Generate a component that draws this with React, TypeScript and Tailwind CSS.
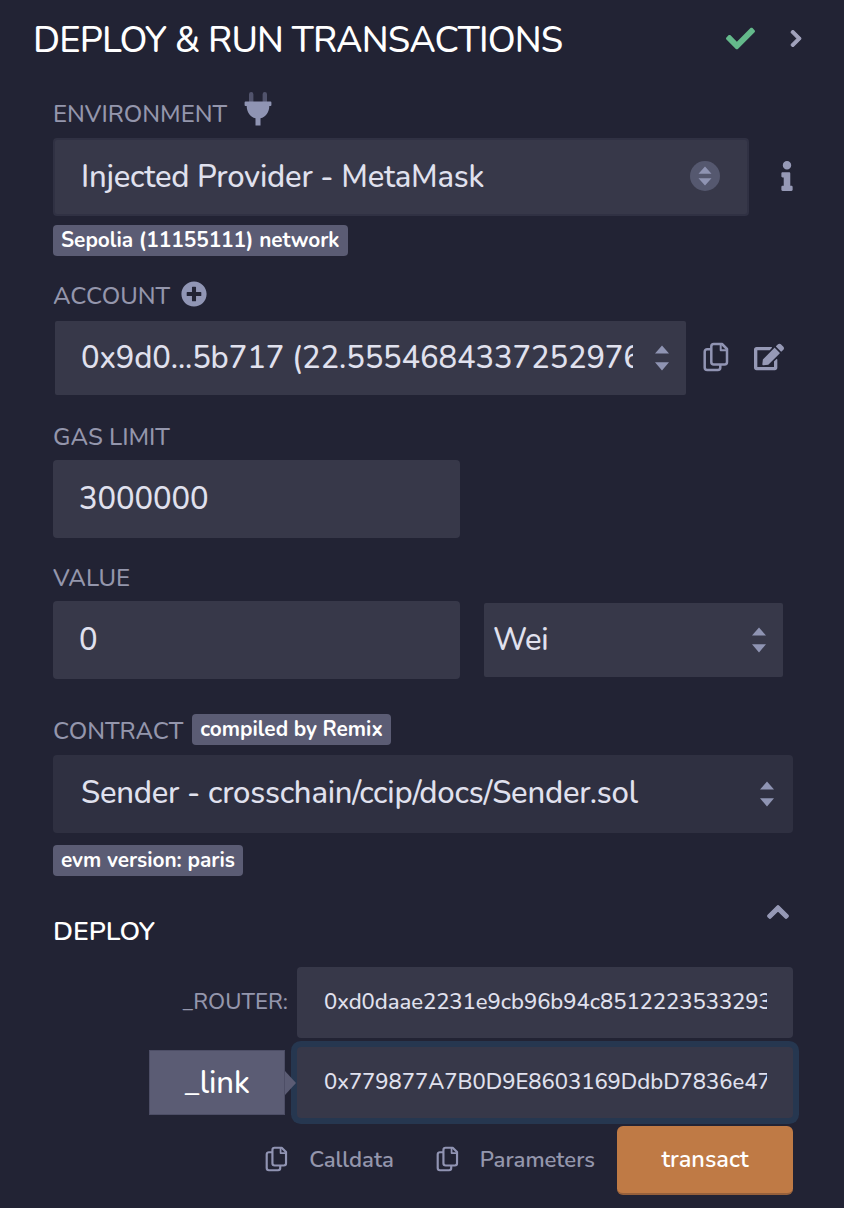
import type { ReactNode } from "react";
import { FaCheck, FaChevronRight, FaChevronUp, FaEdit, FaInfo, FaPlusCircle } from "react-icons/fa";

function PlugIcon() {
  return (
    <svg viewBox="0 0 28 36" className="h-9 w-7" aria-hidden="true">
      <path d="M5 11V3.2a2.2 2.2 0 0 1 4.4 0V11zM18.6 11V3.2a2.2 2.2 0 0 1 4.4 0V11z" fill="#51536c" />
      <path d="M1.500 10.500h25a.9.9 0 0 1 .9.9v2.600a.9.9 0 0 1-.9.9h-1.200c0 6.200-3.600 11-8.800 12.300v7.400h-5v-7.400C6.300 25.900 2.700 21.100 2.700 14.900h-1.200a.9.9 0 0 1-.9-.9v-2.600a.9.9 0 0 1 .9-.9z" fill="#8f94b3" />
    </svg>
  );
}

function CopyIcon({ className }: { className: string }) {
  return (
    <svg viewBox="0 0 26 30" className={className} fill="none" stroke="#9194b3" strokeWidth="2.500" strokeLinejoin="round" aria-hidden="true">
      <path d="M10.800 2h8.200l5 5v13a2.500 2.500 0 0 1-2.500 2.500H10.800A2.500 2.500 0 0 1 8.300 20V4.500A2.500 2.500 0 0 1 10.800 2z" />
      <path d="M17.700 2v6.200h6.200" strokeWidth="2" />
      <path d="M8.300 7.200H4.200a2.500 2.500 0 0 0-2.500 2.500v15.800A2.500 2.500 0 0 0 4.200 28h10.600a2.500 2.500 0 0 0 2.500-2.500v-2.900" />
    </svg>
  );
}

function SortArrows() {
  return (
    <svg viewBox="0 0 14 26" className="h-[26px] w-3.5 shrink-0" fill="#8f94b3" aria-hidden="true">
      <path d="M7 0.500 14 8.500H0zM7 25.500 14 17.200H0z" />
    </svg>
  );
}

function Label({ children }: { children: ReactNode }) {
  return <span className="block pt-px text-[24px] leading-[30px] text-[#9496ac]">{children}</span>;
}

function Badge({ children }: { children: ReactNode }) {
  return (
    <span className="flex h-[31px] items-center rounded bg-[#5b5c74] px-2 text-[20.8px] leading-none font-bold text-white">
      {children}
    </span>
  );
}

export default function App() {
  return (
    <div className="h-[1208px] w-[844px] overflow-hidden bg-[#222334] font-['Nunito','Lato',sans-serif] font-medium whitespace-nowrap text-[#e0e1ee]">
      <header className="flex h-[80px] items-center pr-[41px] pl-[33px]">
        <h1 className="flex-1 pt-px text-[36.2px] leading-none font-medium tracking-[-0.8px] text-white">DEPLOY &amp; RUN TRANSACTIONS</h1>
        <FaCheck className="mr-[34px] -mt-1 size-[29px] text-[#64b98b]" />
        <FaChevronRight className="-mt-1 h-[19px] w-[14px] text-[#a2a3bd]" stroke="currentColor" strokeWidth="28" />
      </header>

      <main className="pl-[53px]">
        <div className="flex h-[58px] items-start pt-[11px]">
          <div className="pt-[7px]"><Label>ENVIRONMENT</Label></div>
          <div className="ml-[17px]"><PlugIcon /></div>
        </div>
        <div className="flex items-center">
          <div className="flex h-[78px] w-[696px] items-center rounded border-2 border-[#303143] bg-[#373849] pr-[27px] pl-[26px] text-[31px]">
            <span className="flex-1 tracking-[-0.22px]">Injected Provider - MetaMask</span>
            <span className="mb-[3px] flex size-[30px] items-center justify-center rounded-full bg-[#55586f]">
              <svg viewBox="0 0 14 20" className="h-5 w-3.5" fill="#8f94b3" aria-hidden="true">
                <path d="M7 .5 13.500 7.800H.5zM7 19.500 13.500 12.200H.5z" />
              </svg>
            </span>
          </div>
          <FaInfo className="mb-0.5 ml-[23px] size-[30px] text-[#9699b6]" />
        </div>
        <div className="flex pt-[9px]"><Badge>Sepolia (11155111) network</Badge></div>

        <div className="flex h-[65px] items-start pt-6">
          <Label>ACCOUNT</Label>
          <FaPlusCircle className="mt-px ml-[11px] size-[26px] text-[#9196b5]" />
        </div>
        <div className="flex items-center">
          <div className="ml-0.5 flex h-[74px] w-[631px] items-center rounded-xs bg-[#373849] pr-[17px] pl-[26px] text-[31px]">
            <span className="w-[552px] overflow-hidden tracking-[-0.12px]">0x9d0...5b717 (22.555468433725297600</span>
            <span className="ml-[22px]"><SortArrows /></span>
          </div>
          <CopyIcon className="mb-[3px] ml-[17px] h-[30px] w-[26px]" />
          <FaEdit className="mb-[3px] ml-[25px] size-[30px] text-[#9699b6]" />
        </div>

        <div className="flex h-[65px] items-start pt-[26px]"><Label>GAS LIMIT</Label></div>
        <div className="flex h-[78px] w-[407px] items-center rounded bg-[#373849] pl-[26px] text-[31px] tracking-[-0.1px]">3000000</div>

        <div className="flex h-[63px] items-start pt-6"><Label>VALUE</Label></div>
        <div className="flex items-center gap-6">
          <div className="flex h-[78px] w-[407px] items-center rounded bg-[#373849] pl-[26px] text-[31px]">0</div>
          <div className="flex h-[74px] w-[299px] items-center justify-between rounded-xs bg-[#373849] pr-[17px] pl-[9px] text-[31px]">
            <span className="tracking-[-0.3px]">Wei</span>
            <SortArrows />
          </div>
        </div>

        <div className="flex h-[76px] items-start pt-[35px]">
          <div className="pt-px"><Label>CONTRACT</Label></div>
          <div className="ml-[9px]"><Badge>compiled by Remix</Badge></div>
        </div>
        <div className="flex h-[78px] w-[740px] items-center justify-between rounded bg-[#2f3041] pr-[19px] pl-7 text-[31px]">
          <span className="pb-px tracking-[-0.22px]">Sender - crosschain/ccip/docs/Sender.sol</span>
          <SortArrows />
        </div>
        <div className="flex pt-3"><Badge>evm version: paris</Badge></div>

        <div className="flex h-[91px] w-[740px] items-start justify-between">
          <h2 className="pt-[38px] text-[26.6px] leading-[34px] font-semibold text-white">DEPLOY</h2>
          <FaChevronUp className="mt-6 mr-[3px] size-6 text-[#9699b6]" stroke="currentColor" strokeWidth="28" />
        </div>

        <div className="flex w-[740px] items-center justify-end">
          <span className="mr-[9px] text-[22.200px] text-[#9496ac]">_ROUTER:</span>
          <div className="flex h-[71px] w-[496px] items-center rounded bg-[#373849] pr-[26px] pl-[27px] text-[22.100px]">
            <span className="overflow-hidden tracking-[-0.04px]">0xd0daae2231e9cb96b94c85122235332939</span>
          </div>
        </div>
        <div className="flex w-[740px] items-center justify-end pt-[9px]">
          <div className="flex h-[65px] w-[136px] items-center justify-center border border-[#4d4e66] bg-[#5b5c74] pt-0.5 text-[31px] text-white">_link</div>
          <svg viewBox="0 0 12 24" className="z-10 h-6 w-3" fill="#5b5c74" aria-hidden="true">
            <path d="M0 0 11 12 0 24z" />
          </svg>
          <div className="flex h-[71px] w-[496px] items-center rounded bg-[#373849] pr-[26px] pl-[27px] text-[22.100px] ring-6 ring-[#263750]">
            <span className="overflow-hidden tracking-[-0.04px]">0x779877A7B0D9E8603169DdbD7836e47</span>
          </div>
        </div>
        <div className="flex w-[740px] items-center justify-end pt-2 text-[22.100px] font-semibold text-[#9496ac]">
          <CopyIcon className="mb-[3px] h-[26px] w-[23px]" />
          <span className="ml-[21px]">Calldata</span>
          <CopyIcon className="mb-[3px] ml-[42px] h-[26px] w-[23px]" />
          <span className="ml-[21px]">Parameters</span>
          <button className="ml-[22px] h-[69px] w-[176px] rounded-md border-b-2 border-[#96603b] bg-[#bf7a45] text-[23.500px] text-white">transact</button>
        </div>
      </main>
    </div>
  );
}
